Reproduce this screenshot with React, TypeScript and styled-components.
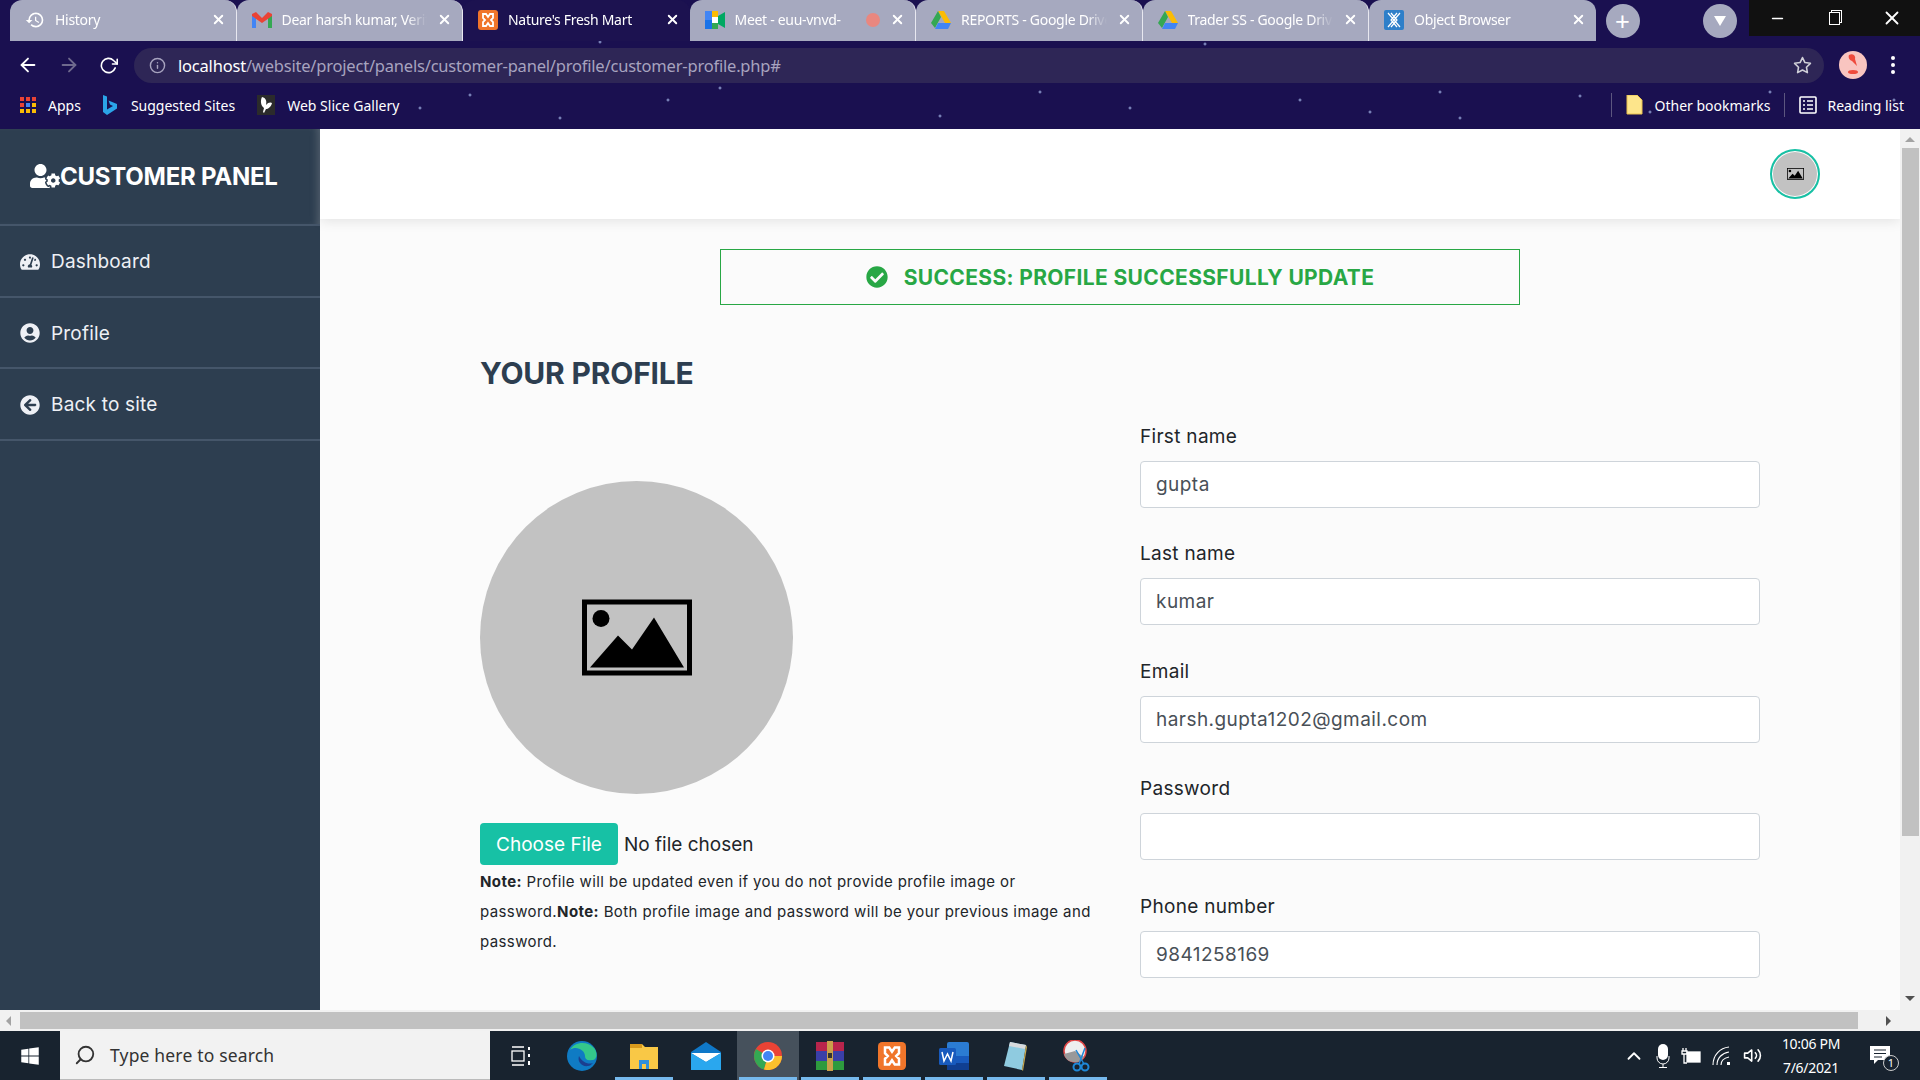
import React from "react";
import styled, { createGlobalStyle } from "styled-components";
import {
  FaUserCog,
  FaTachometerAlt,
  FaUserCircle,
  FaArrowCircleLeft,
  FaCheckCircle,
  FaWindows,
} from "react-icons/fa";
import { FiArrowLeft, FiArrowRight, FiRotateCw, FiInfo, FiStar, FiSearch, FiChevronUp, FiVolume2, FiX, FiMinus } from "react-icons/fi";
import { MdHistory } from "react-icons/md";

const GlobalStyle = createGlobalStyle`
  html, body {
    margin: 0;
    padding: 0;
    width: 1920px;
    height: 1080px;
    overflow: hidden;
  }
  * { box-sizing: border-box; }
`;

const stars = [
  [470, 95], [560, 118], [420, 108], [668, 100], [1040, 92], [1180, 75], [1010, 12], [1090, 52], [1250, 60],
  [1370, 112], [1460, 118], [1580, 96], [1650, 112], [1770, 92], [1860, 70], [1440, 92], [600, 42], [760, 30],
  [1230, 30], [1516, 36], [1894, 100], [1205, 44], [720, 88], [940, 116], [1300, 100], [1130, 108],
];

const starBackground = stars
  .map(([x, y]) => `radial-gradient(circle 2px at ${x}px ${y}px, #a9bcec 0, transparent 100%)`)
  .join(", ");

const Screen = styled.div`
  width: 1920px;
  height: 1080px;
  display: flex;
  flex-direction: column;
  font-family: "Inter", "Liberation Sans", sans-serif;
`;

const BrowserChrome = styled.header`
  height: 129px;
  flex: none;
  display: flex;
  flex-direction: column;
  background-color: #1a1050;
  background-image: ${starBackground};
  font-family: "Noto Sans", "Liberation Sans", sans-serif;
  color: #fff;
`;

const TabRow = styled.div`
  height: 41px;
  flex: none;
  display: flex;
  align-items: stretch;
  padding-left: 10px;
`;

const Tab = styled.div<{ $active?: boolean; $last?: boolean }>`
  width: 226.5px;
  display: flex;
  align-items: center;
  padding: 0 10px 2px 15px;
  gap: 10px;
  font-size: 14px;
  letter-spacing: -0.3px;
  background: ${(p) => (p.$active ? "#1c1250" : "#a6a9bf")};
  border-radius: 12px 12px 0 0;
  border-right: ${(p) => (p.$active || p.$last ? "none" : "1px solid #e8e8f0")};
  white-space: nowrap;
`;

const TabTitle = styled.span`
  flex: 1;
  overflow: hidden;
  min-width: 0;
  mask-image: linear-gradient(to right, #000 86%, transparent);
`;

const TabClose = styled(FiX)`
  font-size: 15px;
  stroke-width: 3;
  flex: none;
`;

const RoundButton = styled.div<{ $gap: number }>`
  width: 34px;
  height: 34px;
  margin-left: ${(p) => p.$gap}px;
  margin-top: 4px;
  border-radius: 50%;
  background: #a6a9bf;
  display: flex;
  align-items: center;
  justify-content: center;
  font-size: 26px;
  line-height: 1;
  color: #fff;
`;

const WindowControls = styled.div`
  margin-left: auto;
  width: 171px;
  height: 36px;
  background: #111;
  display: grid;
  grid-template-columns: repeat(3, 1fr);
  align-items: center;
  justify-items: center;
  font-size: 17px;
`;

const RestoreIcon = styled.span`
  width: 11px;
  height: 13px;
  border: 1px solid #fff;
  box-shadow: 2px -2px 0 -1px #111, 2px -2px 0 0 #fff;
`;

const Toolbar = styled.div`
  height: 42px;
  flex: none;
  display: flex;
  align-items: center;
  padding: 6px 0 0 17px;
  font-size: 22px;
`;

const NavIcon = styled.span<{ $dim?: boolean }>`
  width: 41px;
  display: flex;
  color: ${(p) => (p.$dim ? "#6f6a8e" : "#fff")};
`;

const UrlPill = styled.div`
  width: 1690px;
  margin-left: -6px;
  height: 35px;
  border-radius: 18px;
  background: #2e2656;
  display: flex;
  align-items: center;
  padding: 0 12px 0 15px;
  font-size: 16.5px;
  letter-spacing: -0.2px;
  color: #a7a3bf;
`;

const UrlInfo = styled(FiInfo)`
  font-size: 17px;
  margin-right: 12px;
`;

const UrlHost = styled.span`
  color: #fff;
`;

const UrlStar = styled(FiStar)`
  margin-left: auto;
  font-size: 19px;
  color: #d0d0d8;
`;

const ProfileDot = styled.div`
  width: 28px;
  height: 28px;
  margin-left: 15px;
  border-radius: 50%;
  background: #f9c5c0;
  display: flex;
  align-items: center;
  justify-content: center;
`;

const MenuDots = styled.span`
  margin-left: 24px;
  width: 4px;
  height: 4px;
  border-radius: 50%;
  background: #fff;
  box-shadow: 0 -7px 0 #fff, 0 7px 0 #fff;
`;

const BookmarkBar = styled.div`
  height: 46px;
  flex: none;
  display: flex;
  align-items: center;
  padding: 0 16px 2px 20px;
  font-size: 14px;
`;

const Bookmark = styled.div<{ $gap?: number; $iconGap?: number }>`
  display: flex;
  align-items: center;
  gap: ${(p) => p.$iconGap ?? 10}px;
  margin-right: ${(p) => p.$gap ?? 0}px;
`;

const BookmarkDivider = styled.span<{ $push?: boolean }>`
  width: 1px;
  height: 24px;
  background: #5c567f;
  margin: 0 14px 0 ${(p) => (p.$push ? "auto" : "0")};
`;

const PageArea = styled.div`
  flex: 1;
  min-height: 0;
  display: flex;
  overflow: hidden;
  background: #fbfbfb;
`;

const Sidebar = styled.aside`
  width: 320px;
  flex: none;
  background: #2d3e50;
  color: #eef0f5;
  font-family: "Inter", "Liberation Sans", sans-serif;
`;

const Brand = styled.div`
  height: 97px;
  display: flex;
  align-items: center;
  padding: 0 0 1px 30px;
  border-bottom: 2px solid #45566a;
  box-shadow: inset -8px 0 8px -6px rgba(255, 255, 255, 0.22);
  font-size: 24px;
  font-weight: 700;
  color: #fff;
  letter-spacing: -0.25px;
`;

const BrandIcon = styled(FaUserCog)`
  font-size: 30px;
  flex: none;
`;

const SideItem = styled.a`
  height: 71.5px;
  display: flex;
  align-items: center;
  gap: 10px;
  padding: 2px 0 0 20px;
  border-bottom: 2px solid #45566a;
  font-size: 19px;
  letter-spacing: 0.2px;
`;

const SideIcon = styled.span`
  width: 21px;
  display: flex;
  font-size: 20px;
`;

const MainColumn = styled.main`
  flex: 1;
  min-width: 0;
  display: flex;
  flex-direction: column;
`;

const TopBar = styled.div`
  height: 90px;
  flex: none;
  background: #fff;
  box-shadow: 0 2px 12px rgba(0, 0, 0, 0.1);
  display: flex;
  align-items: center;
  justify-content: flex-end;
  padding: 0 80px 0 0;
`;

const Avatar = styled.div`
  width: 50px;
  height: 50px;
  border-radius: 50%;
  background: #c2c2c2;
  border: 2px solid #17c1a5;
  box-shadow: inset 0 0 0 1px #fff;
  display: flex;
  align-items: center;
  justify-content: center;
`;

const Content = styled.div`
  padding: 30px 140px 0 160px;
  color: #2d3e50;
`;

const Alert = styled.div`
  width: 800px;
  height: 56px;
  margin: 0 auto;
  border: 1px solid #28a745;
  display: flex;
  align-items: center;
  justify-content: center;
  gap: 16px;
  color: #28a745;
  font-size: 21px;
  font-weight: 700;
  letter-spacing: 0.35px;
`;

const Heading = styled.h2`
  margin: 50px 0 0;
  font-size: 30px;
  line-height: 36px;
  font-weight: 700;
  letter-spacing: -0.2px;
`;

const FormGrid = styled.div`
  display: grid;
  grid-template-columns: 660px 620px;
`;

const PhotoColumn = styled.div`
  padding-top: 90px;
`;

const Photo = styled.div`
  width: 313px;
  height: 313px;
  border-radius: 50%;
  background: #c2c2c2;
  display: flex;
  align-items: center;
  justify-content: center;
`;

const FileRow = styled.div`
  margin-top: 29px;
  display: flex;
  align-items: center;
  gap: 6px;
  font-size: 19px;
  color: #212529;
`;

const ChooseFile = styled.button`
  width: 138px;
  height: 42px;
  border: none;
  border-radius: 4px;
  background: #17c1a5;
  color: #fff;
  font: inherit;
  padding: 0;
`;

const Note = styled.p`
  margin: 0;
  width: 616px;
  padding-top: 2px;
  font-size: 15px;
  line-height: 30px;
  letter-spacing: 0.4px;
  color: #212529;
`;

const FieldColumn = styled.div`
  padding-top: 34px;
  display: flex;
  flex-direction: column;
  gap: 34.4px;
`;

const Field = styled.label`
  display: flex;
  flex-direction: column;
  gap: 12px;
  font-size: 19px;
  line-height: 24px;
  letter-spacing: 0.3px;
  color: #212529;
`;

const Input = styled.input`
  height: 47px;
  width: 620px;
  padding: 0 15px;
  border: 1px solid #ced4da;
  border-radius: 4px;
  background: #fff;
  color: #495057;
  font: inherit;
  letter-spacing: 0.45px;
`;

const VScroll = styled.div`
  width: 20px;
  flex: none;
  background: #f1f1f1;
  display: flex;
  flex-direction: column;
  align-items: center;
`;

const ArrowUp = styled.span`
  margin: 8px 0 6px;
  width: 0;
  height: 0;
  border-left: 5px solid transparent;
  border-right: 5px solid transparent;
  border-bottom: 5px solid #a3a3a3;
`;

const ArrowDown = styled.span`
  margin-top: auto;
  margin-bottom: 9px;
  width: 0;
  height: 0;
  border-left: 5px solid transparent;
  border-right: 5px solid transparent;
  border-top: 5px solid #505050;
`;

const VThumb = styled.div`
  width: 17px;
  height: 688px;
  background: #c1c1c1;
`;

const HScroll = styled.div`
  height: 20px;
  flex: none;
  display: flex;
  align-items: center;
  background: #f1f1f1;
  border-top: 2px solid #f1f1f1;
  padding-bottom: 1px;
`;

const ArrowLeft = styled.span`
  margin: 0 9px 0 6px;
  width: 0;
  height: 0;
  border-top: 5px solid transparent;
  border-bottom: 5px solid transparent;
  border-right: 5px solid #a3a3a3;
`;

const ArrowRight = styled.span`
  margin-left: 28px;
  width: 0;
  height: 0;
  border-top: 5px solid transparent;
  border-bottom: 5px solid transparent;
  border-left: 5px solid #505050;
`;

const HThumb = styled.div`
  width: 1838px;
  height: 17px;
  background: #c1c1c1;
`;

const Taskbar = styled.footer`
  height: 50px;
  flex: none;
  display: flex;
  align-items: center;
  background: #18232f;
  color: #fff;
  border-top: 1px solid #f1f1f1;
  font-family: "Noto Sans", "Liberation Sans", sans-serif;
`;

const StartButton = styled.div`
  width: 60px;
  height: 100%;
  display: flex;
  align-items: center;
  justify-content: center;
  font-size: 20px;
`;

const SearchBox = styled.div`
  width: 430px;
  height: 100%;
  background: #f2f2f2;
  border-bottom: 1px solid #bbb;
  color: #333;
  display: flex;
  align-items: center;
  gap: 14px;
  padding-left: 14px;
  font-size: 17.5px;
  letter-spacing: 0.17px;
`;

const FlippedSearch = styled(FiSearch)`
  transform: scaleX(-1);
  font-size: 22px;
`;

const TaskIcons = styled.div`
  display: flex;
  height: 100%;
  padding-left: 1px;
`;

const TaskSlot = styled.div<{ $w?: number; $active?: boolean; $open?: boolean }>`
  width: ${(p) => p.$w ?? 62}px;
  height: 100%;
  display: flex;
  align-items: center;
  justify-content: center;
  position: relative;
  background: ${(p) => (p.$active ? "#46515c" : "transparent")};

  &::after {
    content: "";
    display: ${(p) => (p.$open ? "block" : "none")};
    position: absolute;
    left: 2px;
    right: 2px;
    bottom: 0;
    height: 3px;
    background: #76b9ed;
  }
`;

const Tray = styled.div`
  margin-left: auto;
  display: flex;
  align-items: center;
  height: 100%;
  gap: 11px;
  padding-right: 20px;
  font-size: 19px;
`;

const Clock = styled.div`
  width: 76px;
  display: flex;
  flex-direction: column;
  gap: 5px;
  align-items: center;
  font-size: 14px;
  line-height: 19px;
  letter-spacing: -0.3px;
`;

const NotifyWrap = styled.div`
  width: 40px;
  display: flex;
  justify-content: center;
  position: relative;
`;

const NotifyBadge = styled.span`
  position: absolute;
  left: 23px;
  top: 9px;
  width: 16px;
  height: 16px;
  border-radius: 50%;
  border: 1px solid #ccc;
  background: #18232f;
  font-size: 11px;
  line-height: 14px;
  text-align: center;
`;

const PictureIcon = ({ size }: { size: number }) => (
  <svg width={size} height={size * 0.7} viewBox="0 0 110 76">
    <rect x="2.5" y="2.5" width="105" height="71" fill="none" stroke="#000" strokeWidth="5" />
    <circle cx="19" cy="19" r="8.5" fill="#000" />
    <path d="M8 68 L36 36 L50 50 L72 18 L102 68 Z" fill="#000" />
  </svg>
);

const GmailIcon = () => (
  <svg width="20" height="16" viewBox="0 0 20 16">
    <path d="M0 3v13h4V6z" fill="#4285f4" />
    <path d="M20 3v13h-4V6z" fill="#34a853" />
    <path d="M0 2l4-2 6 6 6-6 4 2v2l-10 7L0 4z" fill="#ea4335" />
  </svg>
);

const XamppIcon = ({ size = 20 }: { size?: number }) => (
  <svg width={size} height={size} viewBox="0 0 20 20">
    <rect width="20" height="20" rx="3" fill="#f0752a" />
    <path d="M5 4h3l2 3 2-3h3v4l-2 2 2 2v4h-3l-2-3-2 3H5v-4l2-2-2-2z" fill="none" stroke="#fff" strokeWidth="1.8" />
  </svg>
);

const MeetIcon = () => (
  <svg width="20" height="18" viewBox="0 0 20 18">
    <rect x="0" y="0" width="7" height="9" fill="#4285f4" />
    <rect x="0" y="9" width="7" height="9" fill="#1a73e8" />
    <rect x="7" y="0" width="6" height="6" fill="#fbbc04" />
    <rect x="7" y="12" width="6" height="6" fill="#34a853" />
    <path d="M7 6h6v6H7z" fill="#fff" />
    <path d="M13 5l7-4v16l-7-4z" fill="#00a862" />
  </svg>
);

const RecordingDot = styled.span`
  width: 14px;
  height: 14px;
  flex: none;
  border-radius: 50%;
  background: #e9877f;
`;

const DriveIcon = () => (
  <svg width="20" height="18" viewBox="0 0 20 18">
    <path d="M7 0h6l7 12h-6z" fill="#fbbc04" />
    <path d="M7 0l3 6-6 11-4-5z" fill="#34a853" />
    <path d="M4 18l3-6h13l-3 6z" fill="#4285f4" />
  </svg>
);

const ObjectIcon = () => (
  <svg width="20" height="20" viewBox="0 0 20 20">
    <rect width="20" height="20" rx="2" fill="#2e7fc9" />
    <path d="M4 3l12 14M16 3L4 17M7 3l6 7-6 7M13 3l-6 7 6 7" stroke="#fff" strokeWidth="1.2" fill="none" />
  </svg>
);

const AppsIcon = () => (
  <svg width="16" height="16" viewBox="0 0 16 16">
    {[0, 1, 2].map((row) =>
      [0, 1, 2].map((col) => (
        <rect
          key={`${row}-${col}`}
          x={col * 6}
          y={row * 6}
          width="4"
          height="4"
          fill={["#ea4335", "#4285f4", "#fbbc04"][row === 1 ? col : row === 0 ? 0 : 2]}
        />
      )),
    )}
  </svg>
);

const BingIcon = () => (
  <svg width="14" height="20" viewBox="0 0 14 20">
    <path d="M0 0l4 1.5v13l6-3.500-3-1.500-1.500-4L14 9v4.500L4 20l-4-3z" fill="#2ba4e8" />
  </svg>
);

const SliceIcon = () => (
  <svg width="18" height="20" viewBox="0 0 18 20">
    <rect width="18" height="20" fill="#2b2b2b" />
    <path d="M5 2c4 1 5 4 4 8 2-3 5-3 6-2-1 4-4 6-6 6l-2 4-1-1 1-4C4 11 3 6 5 2z" fill="#fff" />
  </svg>
);

const FolderIcon = () => (
  <svg width="17" height="20" viewBox="0 0 17 20">
    <path d="M1 0h10l5 5v14H1z" fill="#fde58b" stroke="#e8c04c" />
  </svg>
);

const ReadingIcon = () => (
  <svg width="18" height="18" viewBox="0 0 18 18" fill="none" stroke="#fff" strokeWidth="1.6">
    <rect x="1" y="1" width="16" height="16" rx="1" />
    <path d="M4 5h2M8 5h6M4 9h2M8 9h6M4 13h2M8 13h6" />
  </svg>
);

const ProfileGlyph = () => (
  <svg width="14" height="22" viewBox="0 0 14 22">
    <path d="M3 1c4-2 7 1 6 4l2 7-5-5C3 6 2 3 3 1z" fill="#ef4a3c" />
    <ellipse cx="7" cy="18" rx="5" ry="2" fill="#ef4a3c" />
  </svg>
);

const EdgeIcon = () => (
  <svg width="30" height="30" viewBox="0 0 30 30">
    <circle cx="15" cy="15" r="15" fill="#0f7bc4" />
    <path d="M3 9C7 1 20-1 27 7c4 5 3 12-2 12-5 1-7-1-7-4 0-6-9-11-15-6z" fill="#34c78b" />
    <path d="M12 15c-2 6 3 11 9 10 2 0 3-1 5-3-5 2-11-1-14-7z" fill="#1b3f90" />
  </svg>
);

const ExplorerIcon = () => (
  <svg width="28" height="28" viewBox="0 0 28 28">
    <path d="M0 2h12l3 3h13v22H0z" fill="#f9c846" />
    <path d="M0 2h12v4H0z" fill="#d99a1c" />
    <path d="M9 27v-9h10v9h-3v-5h-4v5z" fill="#2f8fdc" />
  </svg>
);

const MailIcon = () => (
  <svg width="30" height="28" viewBox="0 0 30 28">
    <path d="M0 10L15 0l15 10v18H0z" fill="#0f78c8" />
    <path d="M0 11h30L15 20z" fill="#fff" />
    <path d="M0 11l15 9 15-9v17H0z" fill="#2aa7ee" />
  </svg>
);

const ChromeIcon = () => (
  <svg width="28" height="28" viewBox="0 0 28 28">
    <circle cx="14" cy="14" r="14" fill="#ea4335" />
    <path d="M14 14L2 7A14 14 0 0 0 10 27.500z" fill="#34a853" />
    <path d="M14 14h14a14 14 0 0 1-18 13.500z" fill="#fbc02d" />
    <circle cx="14" cy="14" r="6.500" fill="#fff" />
    <circle cx="14" cy="14" r="5" fill="#4285f4" />
  </svg>
);

const RarIcon = () => (
  <svg width="30" height="30" viewBox="0 0 30 30">
    <rect x="1" y="1" width="28" height="9" fill="#b8254c" />
    <rect x="1" y="10" width="28" height="10" fill="#3a3fa8" />
    <rect x="1" y="20" width="28" height="9" fill="#2e9a3e" />
    <rect x="12" y="0" width="6" height="30" fill="#c9a04a" />
    <rect x="13" y="12" width="4" height="5" fill="#333" />
  </svg>
);

const WordIcon = () => (
  <svg width="30" height="28" viewBox="0 0 30 28">
    <rect x="8" y="0" width="22" height="28" rx="2" fill="#2b7cd3" />
    <rect x="8" y="14" width="22" height="7" fill="#185abd" />
    <rect x="8" y="21" width="22" height="7" fill="#103f91" />
    <rect x="0" y="6" width="17" height="17" rx="1.500" fill="#185abd" />
    <path d="M3 10l2 9 3.500-7 3.500 7 2-9" stroke="#fff" strokeWidth="1.500" fill="none" />
  </svg>
);

const PadIcon = () => (
  <svg width="28" height="30" viewBox="0 0 28 30">
    <path d="M8 1l16 3-4 25-18-4z" fill="#8fcbe0" />
    <path d="M8 1l16 3-1 4L7 5z" fill="#d8dadc" />
    <path d="M24 4l1 2-4 24-1-1z" fill="#c9a94f" />
  </svg>
);

const SnipIcon = () => (
  <svg width="30" height="32" viewBox="0 0 30 32">
    <circle cx="12" cy="11" r="11" fill="#eee" stroke="#e04545" strokeWidth="1.500" />
    <path d="M1 14a11 11 0 0 0 20 3L12 11z" fill="#999" />
    <path d="M13 10l8 14M22 8l-6 16" stroke="#1e88d8" strokeWidth="1.500" />
    <circle cx="22" cy="27" r="3.500" fill="none" stroke="#1e88d8" strokeWidth="2" />
    <circle cx="14" cy="27" r="3.500" fill="none" stroke="#1e88d8" strokeWidth="2" />
  </svg>
);

const TaskViewIcon = () => (
  <svg width="20" height="20" viewBox="0 0 20 20" fill="none" stroke="#fff" strokeWidth="1.300">
    <path d="M1 1h12M1 19h12" />
    <rect x="1" y="5" width="12" height="10" />
    <path d="M18 1v3M18 8v3M18 15v4" strokeWidth="2" />
  </svg>
);

const MicIcon = () => (
  <svg width="14" height="24" viewBox="0 0 14 24">
    <rect x="2" y="0" width="10" height="16" rx="5" fill="#fff" />
    <path d="M1 12v2a6 6 0 0 0 12 0v-2M7 20v3M3 23.500h8" fill="none" stroke="#fff" strokeWidth="1" />
  </svg>
);

const BatteryIcon = () => (
  <svg width="20" height="20" viewBox="0 0 20 20" fill="none" stroke="#fff" strokeWidth="1.300">
    <rect x="6" y="6" width="13" height="10" fill="#fff" />
    <path d="M2 2v3M5 2v3M1 5h5v3H1zM3 8v9h3" />
  </svg>
);

const WifiIcon = () => (
  <svg width="20" height="20" viewBox="0 0 20 20" fill="none" stroke="#fff" strokeWidth="1.100">
    <path d="M1 19C1 9 8 2 17 1M5 19c0-7 5-12 12-13M9 19c0-4 3-7 8-8" />
    <rect x="15" y="16" width="3" height="3" fill="#fff" stroke="none" />
  </svg>
);

const NotifyIcon = () => (
  <svg width="21" height="20" viewBox="0 0 21 20">
    <path d="M0 0h20v14H8l-4 4v-4H0z" fill="#fff" />
    <path d="M4 4h12M4 7.500h12M4 11h8" stroke="#18232f" strokeWidth="1.200" />
  </svg>
);

const tabs = [
  { title: "Dear harsh kumar, Verify", icon: <GmailIcon /> },
  { title: "Nature's Fresh Mart", icon: <XamppIcon />, active: true },
  { title: "Meet - euu-vnvd-", icon: <MeetIcon />, recording: true },
  { title: "REPORTS - Google Drive", icon: <DriveIcon /> },
  { title: "Trader SS - Google Drive", icon: <DriveIcon /> },
  { title: "Object Browser", icon: <ObjectIcon />, last: true },
];

const fields = [
  { label: "First name", value: "gupta", type: "text" },
  { label: "Last name", value: "kumar", type: "text" },
  { label: "Email", value: "harsh.gupta1202@gmail.com", type: "text" },
  { label: "Password", value: "", type: "password" },
  { label: "Phone number", value: "9841258169", type: "text" },
];

const App: React.FC = () => {
  return (
    <Screen>
      <GlobalStyle />
      <BrowserChrome>
        <TabRow>
          <Tab>
            <MdHistory size={20} />
            <TabTitle>History</TabTitle>
            <TabClose />
          </Tab>
          {tabs.map((tab) => (
            <Tab key={tab.title} $active={tab.active} $last={tab.last}>
              {tab.icon}
              <TabTitle>{tab.title}</TabTitle>
              {tab.recording && <RecordingDot />}
              <TabClose />
            </Tab>
          ))}
          <RoundButton $gap={10}>+</RoundButton>
          <RoundButton $gap={63}>
            <svg width="12" height="10" viewBox="0 0 12 10">
              <path d="M0 0h12L6 10z" fill="#fff" />
            </svg>
          </RoundButton>
          <WindowControls>
            <FiMinus />
            <RestoreIcon />
            <FiX size={22} />
          </WindowControls>
        </TabRow>
        <Toolbar>
          <NavIcon>
            <FiArrowLeft />
          </NavIcon>
          <NavIcon $dim>
            <FiArrowRight />
          </NavIcon>
          <NavIcon>
            <FiRotateCw size={19} />
          </NavIcon>
          <UrlPill>
            <UrlInfo />
            <UrlHost>localhost</UrlHost>/website/project/panels/customer-panel/profile/customer-profile.php#
            <UrlStar />
          </UrlPill>
          <ProfileDot>
            <ProfileGlyph />
          </ProfileDot>
          <MenuDots />
        </Toolbar>
        <BookmarkBar>
          <Bookmark $gap={22} $iconGap={12}>
            <AppsIcon />
            Apps
          </Bookmark>
          <Bookmark $gap={22} $iconGap={14}>
            <BingIcon />
            Suggested Sites
          </Bookmark>
          <Bookmark $iconGap={12}>
            <SliceIcon />
            Web Slice Gallery
          </Bookmark>
          <BookmarkDivider $push />
          <Bookmark $gap={14} $iconGap={12}>
            <FolderIcon />
            Other bookmarks
          </Bookmark>
          <BookmarkDivider />
          <Bookmark>
            <ReadingIcon />
            Reading list
          </Bookmark>
        </BookmarkBar>
      </BrowserChrome>

      <PageArea>
        <Sidebar>
          <Brand>
            <BrandIcon />
            CUSTOMER PANEL
          </Brand>
          <SideItem>
            <SideIcon>
              <FaTachometerAlt />
            </SideIcon>
            Dashboard
          </SideItem>
          <SideItem>
            <SideIcon>
              <FaUserCircle />
            </SideIcon>
            Profile
          </SideItem>
          <SideItem>
            <SideIcon>
              <FaArrowCircleLeft />
            </SideIcon>
            Back to site
          </SideItem>
        </Sidebar>
        <MainColumn>
          <TopBar>
            <Avatar>
              <PictureIcon size={17} />
            </Avatar>
          </TopBar>
          <Content>
            <Alert>
              <FaCheckCircle size={22} />
              SUCCESS: PROFILE SUCCESSFULLY UPDATE
            </Alert>
            <Heading>YOUR PROFILE</Heading>
            <FormGrid>
              <PhotoColumn>
                <Photo>
                  <PictureIcon size={110} />
                </Photo>
                <FileRow>
                  <ChooseFile>Choose File</ChooseFile>
                  No file chosen
                </FileRow>
                <Note>
                  <b>Note:</b> Profile will be updated even if you do not provide profile image or password.
                  <b>Note:</b> Both profile image and password will be your previous image and password.
                </Note>
              </PhotoColumn>
              <FieldColumn>
                {fields.map((field) => (
                  <Field key={field.label}>
                    {field.label}
                    <Input type={field.type} defaultValue={field.value} />
                  </Field>
                ))}
              </FieldColumn>
            </FormGrid>
          </Content>
        </MainColumn>
        <VScroll>
          <ArrowUp />
          <VThumb />
          <ArrowDown />
        </VScroll>
      </PageArea>
      <HScroll>
        <ArrowLeft />
        <HThumb />
        <ArrowRight />
      </HScroll>

      <Taskbar>
        <StartButton>
          <FaWindows />
        </StartButton>
        <SearchBox>
          <FlippedSearch />
          Type here to search
        </SearchBox>
        <TaskIcons>
          <TaskSlot $w={60}>
            <TaskViewIcon />
          </TaskSlot>
          <TaskSlot>
            <EdgeIcon />
          </TaskSlot>
          <TaskSlot $open>
            <ExplorerIcon />
          </TaskSlot>
          <TaskSlot>
            <MailIcon />
          </TaskSlot>
          <TaskSlot $active $open>
            <ChromeIcon />
          </TaskSlot>
          <TaskSlot $open>
            <RarIcon />
          </TaskSlot>
          <TaskSlot $open>
            <XamppIcon size={28} />
          </TaskSlot>
          <TaskSlot $open>
            <WordIcon />
          </TaskSlot>
          <TaskSlot $open>
            <PadIcon />
          </TaskSlot>
          <TaskSlot $open>
            <SnipIcon />
          </TaskSlot>
        </TaskIcons>
        <Tray>
          <FiChevronUp size={22} />
          <MicIcon />
          <BatteryIcon />
          <WifiIcon />
          <FiVolume2 />
          <Clock>
            <span>10:06 PM</span>
            <span>7/6/2021</span>
          </Clock>
          <NotifyWrap>
            <NotifyIcon />
            <NotifyBadge>1</NotifyBadge>
          </NotifyWrap>
        </Tray>
      </Taskbar>
    </Screen>
  );
};

export default App;
